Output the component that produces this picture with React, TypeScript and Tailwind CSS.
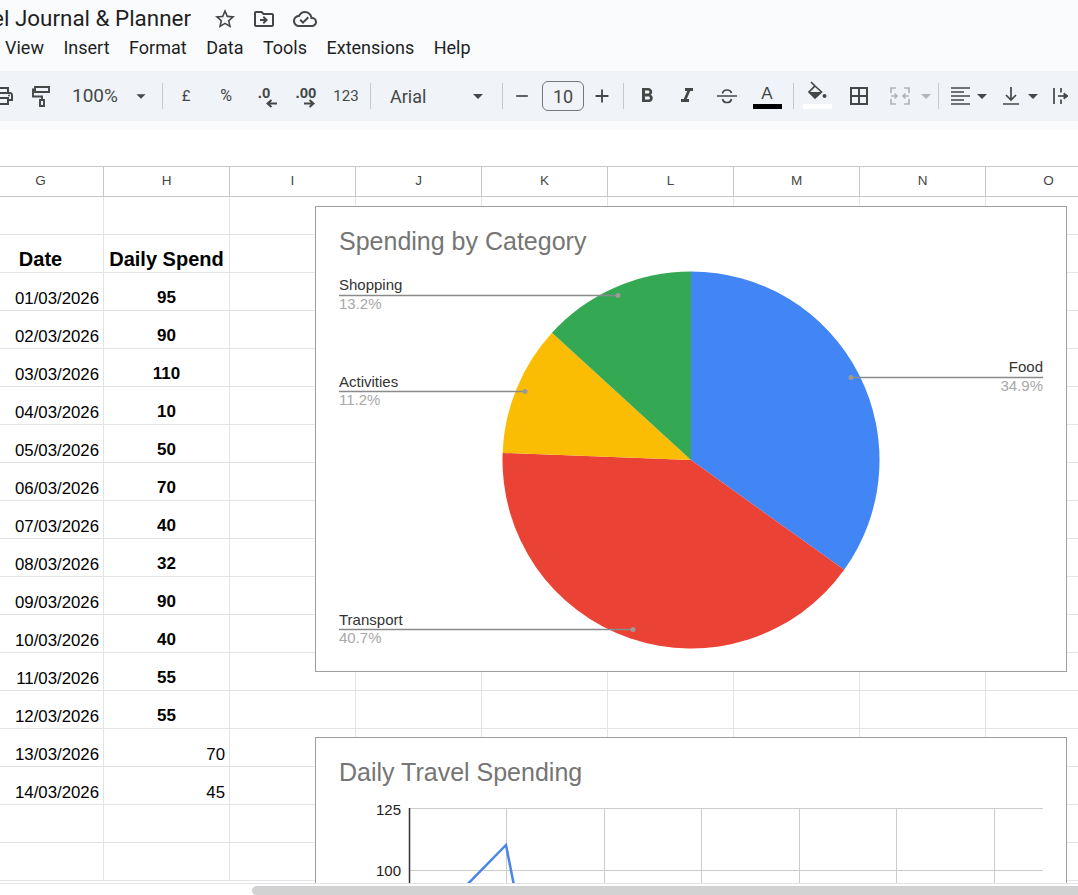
import React from "react";
import {
  MdStarBorder, MdOutlineDriveFileMove, MdOutlineCloudDone, MdOutlinePrint,
  MdFormatBold, MdFormatItalic, MdBorderAll,
  MdArrowDropDown, MdRemove, MdAdd,
} from "react-icons/md";

const cols = ["G", "H", "I", "J", "K", "L", "M", "N", "O"];
const data: [string, string, boolean][] = [
  ["01/03/2026", "95", true], ["02/03/2026", "90", true], ["03/03/2026", "110", true], ["04/03/2026", "10", true],
  ["05/03/2026", "50", true], ["06/03/2026", "70", true], ["07/03/2026", "40", true], ["08/03/2026", "32", true],
  ["09/03/2026", "90", true], ["10/03/2026", "40", true], ["11/03/2026", "55", true], ["12/03/2026", "55", true],
  ["13/03/2026", "70", false], ["14/03/2026", "45", false],
];
const rows = 18;
const R = 188.5;

function polar(a: number, r = R, cx = 691, cy = 460) {
  const t = (a * Math.PI) / 180;
  return [cx + r * Math.sin(t), cy - r * Math.cos(t)];
}
function slice(a: number, b: number) {
  const [x1, y1] = polar(a);
  const [x2, y2] = polar(b);
  return `M691 460L${x1} ${y1}A${R} ${R} 0 ${b - a > 180 ? 1 : 0} 1 ${x2} ${y2}Z`;
}

function Sep({ className }: { className: string }) {
  return <div className={`w-px h-[26px] bg-[#c7c7c7] shrink-0 ${className}`} />;
}
function Cell({ className = "w-[40px]", children }: { className?: string; children: React.ReactNode }) {
  return <div className={`h-full shrink-0 flex items-center justify-center text-[#444746] ${className}`}>{children}</div>;
}

function Cells(r: number) {
  const d = data[r - 2];
  return cols.map((c, i) => {
    let content: React.ReactNode = null;
    let cls = "";
    if (r === 1) {
      if (i === 0) { content = "Date"; cls = "justify-center font-bold text-[20px] leading-[26px]"; }
      if (i === 1) { content = "Daily Spend"; cls = "justify-center font-bold text-[20px] leading-[26px]"; }
    } else if (d) {
      if (i === 0) { content = d[0]; cls = "justify-end pr-[4px] text-[16.8px] leading-[19px] pb-[2px]"; }
      if (i === 1) {
        content = d[1];
        cls = d[2] ? "justify-center font-bold text-[17px] leading-[19px] pb-[3px]" : "justify-end pr-[4px] text-[16.8px] leading-[19px] pb-[2px]";
      }
    }
    return (
      <div key={c} className={`h-[38px] border-r border-b border-[#e1e3e6] flex items-end text-black whitespace-nowrap ${cls}`}>
        {content}
      </div>
    );
  });
}

function SmallArrow({ left }: { left?: boolean }) {
  return (
    <svg width="11" height="9" viewBox="0 0 11 9" fill="none" stroke="#444746" strokeWidth="2" className={left ? "rotate-180" : ""}>
      <path d="M0 4.5h9M5.5 1l4 3.5-4 3.5" />
    </svg>
  );
}

export default function App() {
  return (
    <div className="w-[1078px] h-[895px] overflow-hidden flex flex-col bg-white font-['Liberation_Sans',Arial,sans-serif]">
      <div className="h-[71px] bg-[#f9fbfd] shrink-0 flex flex-col">
        <div className="flex items-center h-[38px] shrink-0">
          <div className="w-[191px] flex justify-end overflow-hidden whitespace-nowrap text-[22.4px] text-[#1f1f1f] font-['Roboto',sans-serif]">
            Travel Journal &amp; Planner
          </div>
          <div className="flex items-center ml-[22px] text-[#444746]">
            <MdStarBorder size={24} />
            <MdOutlineDriveFileMove size={24} className="ml-[15px]" />
            <MdOutlineCloudDone size={24} className="ml-[17px]" />
          </div>
        </div>
        <div className="flex items-center gap-[19.5px] pl-[5px] h-[20px] mt-[-1px] text-[18px] text-[#1f1f1f] font-['Roboto',sans-serif]">
          <span>View</span><span>Insert</span><span>Format</span><span>Data</span><span>Tools</span><span>Extensions</span><span>Help</span>
        </div>
      </div>

      <div className="h-[50px] bg-[#f0f4f9] shrink-0 flex items-center -ml-[17px] w-[1130px] overflow-hidden font-['Roboto',sans-serif] text-[#444746]">
        <Cell><MdOutlinePrint size={24} /></Cell>
        <Cell className="w-[36px]">
          <svg width="20" height="24" viewBox="0 0 20 24" fill="none" stroke="#444746" strokeWidth="1.9">
            <path d="M4 3h14v5H4zM4 5.5H2v7h9v3.5M9 16h4v6H9z" />
          </svg>
        </Cell>
        <Cell className="w-[71px] justify-start pl-[13px] text-[19px]">100%</Cell>
        <Cell className="w-[22px]"><MdArrowDropDown size={24} /></Cell>
        <Sep className="ml-[10px]" />
        <Cell className="w-[40px] ml-[3px] text-[15px]">£</Cell>
        <Cell className="w-[40px] text-[16px]">%</Cell>
        <Cell className="w-[40px]">
          <div className="flex flex-col items-center">
            <span className="text-[15px] font-bold leading-[15px] font-['Liberation_Sans',sans-serif] -ml-[4px]">.0</span>
            <span className="ml-[10px] -mt-[1px]"><SmallArrow left /></span>
          </div>
        </Cell>
        <Cell className="w-[40px]">
          <div className="flex flex-col items-center">
            <span className="text-[15px] font-bold leading-[15px] font-['Liberation_Sans',sans-serif]">.00</span>
            <span className="ml-[7px] -mt-[1px]"><SmallArrow /></span>
          </div>
        </Cell>
        <Cell className="w-[40px] text-[15px]">123</Cell>
        <Sep className="ml-[4px]" />
        <Cell className="w-[95px] justify-start pl-[19px] text-[18px]">Arial</Cell>
        <Cell className="w-[24px]"><MdArrowDropDown size={24} /></Cell>
        <Sep className="ml-[12px]" />
        <Cell className="w-[38px]"><MdRemove size={20} /></Cell>
        <div className="w-[42px] h-[30px] ml-[1px] shrink-0 border border-[#747775] rounded-[6px] flex items-center justify-center text-[18px] text-[#444746]">10</div>
        <Cell className="w-[36px]"><MdAdd size={22} /></Cell>
        <Sep className="ml-[3px]" />
        <Cell className="w-[40px] ml-[3px]"><MdFormatBold size={24} /></Cell>
        <Cell className="w-[39px]"><MdFormatItalic size={24} /></Cell>
        <Cell className="w-[41px]">
          <svg width="22" height="16" viewBox="0 0 22 16" fill="none" stroke="#444746" strokeWidth="1.7">
            <path d="M1 8h20M6.5 5.5C7 3 9 2 11 2s4 1 4.5 3M6.5 11C7 13.5 9 14.5 11 14.5s4-1 4.5-3.5" />
          </svg>
        </Cell>
        <Cell className="w-[40px]">
          <div className="flex flex-col items-center w-[29px] -mb-[1px]">
            <span className="text-[17px] leading-[17px] font-['Liberation_Sans',sans-serif]">A</span>
            <div className="w-[29px] h-[5px] bg-black mt-[2px]" />
          </div>
        </Cell>
        <Sep className="ml-[6px]" />
        <Cell className="w-[40px] ml-[3px]">
          <div className="flex flex-col items-center w-[29px] -mt-[2px]">
            <svg width="20" height="18" viewBox="0 0 20 18" className="ml-[1px]">
              <path d="M3 1l4 4M7 5l6.5 6L7 17l-6-6z" fill="none" stroke="#444746" strokeWidth="1.7" />
              <path d="M1 11h12.5L7 17z" fill="#444746" />
              <circle cx="16.5" cy="15" r="2" fill="#444746" />
            </svg>
            <div className="w-[29px] h-[5px] bg-white mt-[5px]" />
          </div>
        </Cell>
        <Cell className="w-[40px] ml-[2px]"><MdBorderAll size={24} /></Cell>
        <Cell className="w-[40px] ml-[1px]">
          <svg width="20" height="18" viewBox="0 0 20 18" fill="none" stroke="#b3b5b6" strokeWidth="1.7">
            <path d="M1 6V1h5M19 6V1h-5M1 12v5h5M19 12v5h-5M1 9h6M4.5 6.5 7 9l-2.5 2.5M19 9h-6M15.5 6.5 13 9l2.5 2.5" />
          </svg>
        </Cell>
        <Cell className="w-[12px]"><MdArrowDropDown size={24} className="shrink-0 text-[#b3b5b6]" /></Cell>
        <Sep className="ml-[6px]" />
        <Cell className="w-[38px] ml-[2px]">
          <svg width="19" height="18" viewBox="0 0 19 18" fill="none" stroke="#444746" strokeWidth="1.5">
            <path d="M0 1h19M0 5h13M0 9h19M0 13h13M0 17h19" />
          </svg>
        </Cell>
        <Cell className="w-[6px]"><MdArrowDropDown size={24} className="shrink-0" /></Cell>
        <Cell className="w-[38px] ml-[7px]">
          <svg width="16" height="18" viewBox="0 0 16 18" fill="none" stroke="#444746" strokeWidth="1.7">
            <path d="M8 0v13M3 8l5 5 5-5M0 17h16" />
          </svg>
        </Cell>
        <Cell className="w-[6px]"><MdArrowDropDown size={24} className="shrink-0" /></Cell>
        <Cell className="w-[50px]">
          <svg width="16" height="18" viewBox="0 0 16 18" fill="#444746" stroke="#444746" strokeWidth="1.7">
            <path d="M1 1v16M8 1v4.5M8 12.5V17" fill="none" />
            <path d="M5 9h7" fill="none" />
            <path d="M11 6l4 3-4 3z" strokeWidth="1" />
          </svg>
        </Cell>
      </div>

      <div className="h-[9px] bg-[#f9fbfd] shrink-0" />
      <div className="h-[36px] bg-white shrink-0" />

      <div className="flex-1 relative overflow-hidden">
        <div className="-ml-[22px] w-[1134px] grid grid-cols-[repeat(9,126px)]">
          {cols.map((c) => (
            <div key={c} className="h-[31px] border-t border-b border-r border-[#c7c7c7] flex items-center justify-center text-[13.5px] text-[#444746]">
              {c}
            </div>
          ))}
          {Array.from({ length: rows }).map((_, r) => (
            <React.Fragment key={r}>{Cells(r)}</React.Fragment>
          ))}
        </div>

        <div className="absolute left-[315px] top-[40px] w-[752px] h-[466px] bg-white border border-[#9e9e9e]">
          <svg width="750" height="464" viewBox="316 207 750 464" className="block font-['Liberation_Sans',sans-serif]">
            <path d={slice(0, 125.64)} fill="#4285f4" />
            <path d={slice(125.64, 272.16)} fill="#ea4335" />
            <path d={slice(272.16, 312.48)} fill="#fbbc04" />
            <path d={slice(312.48, 360)} fill="#34a853" />
            <text x="339" y="250" fontSize="25" fill="#757575">Spending by Category</text>
            <g stroke="#8a8a8a" strokeWidth="1.6">
              <path d="M339 295.5H618M339 391.5H525M339 629.5H633M851 377.5H1043" />
            </g>
            <g fill="#9a9a9a">
              <circle cx="618" cy="295.5" r="2.5" /><circle cx="525" cy="391.5" r="2.5" />
              <circle cx="633" cy="629.5" r="2.5" /><circle cx="851" cy="377.5" r="2.5" />
            </g>
            <g fontSize="15" fill="#333333">
              <text x="339" y="290">Shopping</text>
              <text x="339" y="387">Activities</text>
              <text x="339" y="625">Transport</text>
              <text x="1043" y="372" textAnchor="end">Food</text>
            </g>
            <g fontSize="15" fill="#a8a8a8">
              <text x="339" y="309">13.2%</text>
              <text x="339" y="405">11.2%</text>
              <text x="339" y="643">40.7%</text>
              <text x="1043" y="391" textAnchor="end">34.9%</text>
            </g>
          </svg>
        </div>

        <div className="absolute left-[315px] top-[571px] w-[752px] h-[466px] bg-white border border-[#9e9e9e]">
          <svg width="750" height="464" viewBox="316 738 750 464" className="block font-['Liberation_Sans',sans-serif]">
            <text x="339" y="781" fontSize="25" fill="#757575">Daily Travel Spending</text>
            <path d="M409 808.5H1043M409 870.5H1043M506.5 808V960M604.5 808V960M701.5 808V960M799.5 808V960M896.5 808V960M994.5 808V960" stroke="#cccccc" fill="none" />
            <path d="M409.5 808V960" stroke="#333333" strokeWidth="1.5" fill="none" />
            <path d="M457 895L506 845L555 1093" stroke="#4a86e8" strokeWidth="2.5" fill="none" />
            <g fontSize="15" fill="#222222" textAnchor="end">
              <text x="401" y="815">125</text>
              <text x="401" y="876">100</text>
            </g>
          </svg>
        </div>
      </div>

      <div className="h-[12px] shrink-0 border-t border-[#e1e3e6] bg-white pt-[2px] pl-[252px]">
        <div className="h-full bg-[#d2d2d2] rounded-l-[6px]" />
      </div>
    </div>
  );
}
